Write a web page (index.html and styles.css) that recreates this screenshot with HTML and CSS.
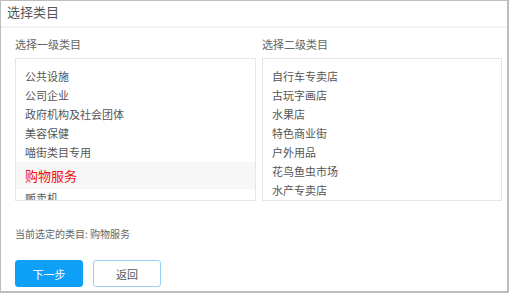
FILE: index.html
```html
<!DOCTYPE html>
<html lang="zh-CN">
  <head>
    <meta charset="UTF-8" />
    <title>选择类目</title>
    <link rel="stylesheet" href="styles.css">
  </head>
  <body>
    <div class="panel">
      <div class="panel-title">选择类目</div>

      <div class="panel-body">
        <div class="columns">
          <div class="column">
            <p class="column-label">选择一级类目</p>
            <ul class="cat-list">
              <li>公共设施</li>
              <li>公司企业</li>
              <li>政府机构及社会团体</li>
              <li>美容保健</li>
              <li>喵街类目专用</li>
              <li class="active">购物服务</li>
              <li>贩卖机</li>
            </ul>
          </div>

          <div class="column">
            <p class="column-label">选择二级类目</p>
            <ul class="cat-list">
              <li>自行车专卖店</li>
              <li>古玩字画店</li>
              <li>水果店</li>
              <li>特色商业街</li>
              <li>户外用品</li>
              <li>花鸟鱼虫市场</li>
              <li>水产专卖店</li>
            </ul>
          </div>
        </div>

        <p class="current">当前选定的类目: 购物服务</p>

        <div class="actions">
          <button class="btn btn-primary">下一步</button>
          <button class="btn btn-default">返回</button>
        </div>
      </div>
    </div>
  </body>
</html>
```

FILE: styles.css
```css
* {
  box-sizing: border-box;
}

body {
  margin: 0;
  font-family: "Noto Sans CJK SC", "Noto Sans", sans-serif;
  color: #666;
  background: #fff;
}

.panel {
  width: 509px;
  height: 293px;
  border-style: solid;
  border-color: #bdbdbd;
  border-width: 1px 2px 2px 1px;
}

.panel-title {
  height: 27px;
  padding-left: 6px;
  font-size: 13px;
  line-height: 21px;
  color: #555;
  border-bottom: 2px solid #f3f3f3;
}

.panel-body {
  padding: 8px 0 0 14px;
}

.columns {
  display: grid;
  grid-template-columns: 241px 240px;
  gap: 6px;
}

.column-label {
  margin: 0 0 6px;
  font-size: 11px;
  line-height: 16px;
  color: #666;
}

.cat-list {
  list-style: none;
  margin: 0;
  padding: 8px 0 0;
  height: 143px;
  overflow: hidden;
  border: 1px solid #e6e6e6;
}

.cat-list li {
  padding-left: 9px;
  font-size: 11px;
  line-height: 19px;
  color: #555;
}

.cat-list li.active {
  line-height: 27px;
  font-size: 13px;
  color: #f01010;
  background: #f7f7f7;
}

.current {
  margin: 26px 0 0;
  font-size: 10px;
  line-height: 14px;
  color: #666;
}

.actions {
  display: flex;
  gap: 10px;
  margin-top: 19px;
}

.btn {
  width: 68px;
  height: 27px;
  padding: 0;
  font-family: inherit;
  font-size: 11px;
  border-radius: 3px;
  cursor: pointer;
}

.btn-primary {
  color: #fff;
  background: #0ea0f7;
  border: 1px solid #0ea0f7;
}

.btn-default {
  color: #555;
  background: #fff;
  border: 1px solid #9ccff4;
}
```
